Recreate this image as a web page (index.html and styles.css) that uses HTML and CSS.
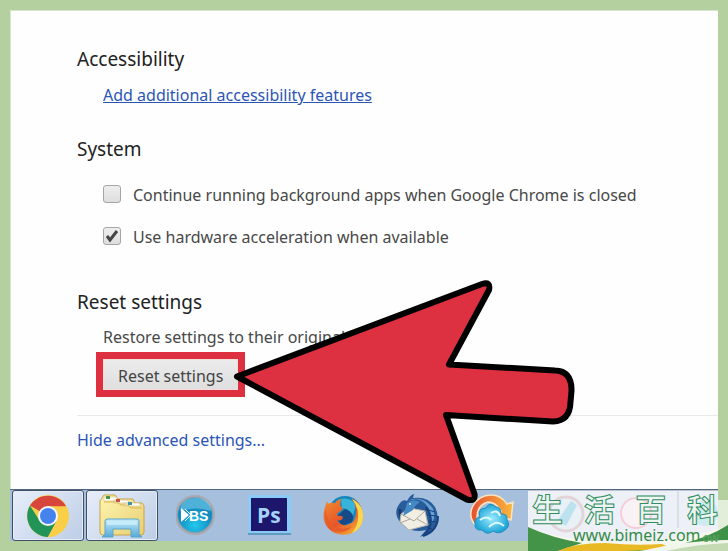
FILE: index.html
```html
<!DOCTYPE html>
<html lang="en">
<head>
<meta charset="utf-8">
<title>Settings</title>
<link rel="stylesheet" href="styles.css">
</head>
<body>
<div class="screen">
  <main class="settings">
    <section class="group">
      <h2>Accessibility</h2>
      <div class="group-body"><a class="underlined" href="#">Add additional accessibility features</a></div>
    </section>
    <section class="group system">
      <h2>System</h2>
      <div class="group-body options">
        <label class="option"><input type="checkbox">Continue running background apps when Google Chrome is closed</label>
        <label class="option"><input type="checkbox" checked>Use hardware acceleration when available</label>
      </div>
    </section>
    <section class="group reset">
      <h2>Reset settings</h2>
      <div class="group-body">
        <p>Restore settings to their original defaults.</p>
        <div class="callout">
          <button type="button">Reset settings</button>
          <svg class="arrow" width="344" height="224" viewBox="233 280 344 224" aria-hidden="true">
            <path d="M237 376.500L482 284Q491 281 489 290L449 364.500L555 370.500Q572 371 571.500 391L570.500 402Q570 421 553 421.500L446 415L474.500 494Q476 502 467 499.500Z" fill="#dd3040" stroke="#000" stroke-width="6" stroke-linejoin="round"/>
          </svg>
        </div>
      </div>
    </section>
    <footer class="more"><a href="#">Hide advanced settings...</a></footer>
  </main>
  <nav class="taskbar" aria-label="Taskbar">
    <button class="task open" type="button" aria-label="Chrome">
      <svg width="42" height="42" viewBox="0 0 42 42">
        <circle cx="21" cy="21" r="21" fill="#f9cf48"/>
        <path d="M21 21L3 10.500A21 21 0 0 1 39.200 11.500H21Z" fill="#d7453b"/>
        <path d="M3 10.500A21 21 0 0 0 21 42L30 25.500 21 21 12.500 25.500Z" fill="#229457"/>
        <path d="M39.200 11.500H21L29.500 26 21 42A21 21 0 0 0 39.200 11.500Z" fill="#f9cf48"/>
        <circle cx="21" cy="21" r="10" fill="#f5f8fb"/><circle cx="21" cy="21" r="8" fill="#4482ee"/>
      </svg>
    </button>
    <button class="task open" type="button" aria-label="File Explorer">
      <svg width="46" height="44" viewBox="0 0 46 44">
        <defs><linearGradient id="folder" x2="1" y2="1"><stop stop-color="#fff5b2"/><stop offset="1" stop-color="#e7cf72"/></linearGradient>
        <linearGradient id="stand" y2="1" x2="0"><stop stop-color="#c5ecfb"/><stop offset="1" stop-color="#57a9d8"/></linearGradient></defs>
        <path d="M1 7L5 1H16L19 5H34L36 9H43L45 12V38Q45 41 42 41H4Q1 41 1 38Z" fill="url(#folder)" stroke="#c8a445"/>
        <path d="M5 7V3H17L20 7ZM15 9V6H28L31 9ZM25 12V9H40L42 12Z" fill="#fffef5" stroke="#c9bd88" stroke-width=".6"/>
        <path d="M5 8H18L22 11H29L32 14H43" fill="none" stroke="#dbb64c"/>
        <path d="M7 2H11V5H7Z" fill="#47924c"/><path d="M17 5H21V8H17Z" fill="#c9513d"/><path d="M29 8H33V11H29Z" fill="#3c93ac"/>
        <path d="M6 27Q6 25 9 25H37Q40 25 40 27V40L43 43H32V35H14V43H3L6 40Z" fill="url(#stand)" stroke="#5aa6ca"/>
        <path d="M8 27H38V31H8Z" fill="#c9effb" opacity=".8"/>
      </svg>
    </button>
    <button class="task" type="button" aria-label="BS Player">
      <svg width="42" height="42" viewBox="0 0 42 42">
        <defs><radialGradient id="disc" cy=".8"><stop stop-color="#22c8ed"/><stop offset="1" stop-color="#138bc0"/></radialGradient></defs>
        <circle cx="19" cy="20" r="19" fill="#7b9fb9" stroke="#aaa9b0" stroke-width="2"/><circle cx="19" cy="20" r="17" fill="url(#disc)"/>
        <path d="M4 16Q5 3 20 3T35 16Q20 11 4 16Z" fill="#8ed8ef" opacity=".5"/>
        <path d="M5 13L13 20 5 27Z" fill="#fff"/><path d="M9 14L15 20 9 26" fill="none" stroke="#fff"/>
        <text x="13" y="26" class="bs">BS</text>
      </svg>
    </button>
    <button class="task" type="button" aria-label="Photoshop">
      <svg width="46" height="42" viewBox="0 0 46 42">
        <path d="M0 0H43V40H0Z" fill="#8acaf4"/><path d="M0 38H43V40H0Z" fill="#629bbf"/><path d="M3 3H39V36H3Z" fill="#1c176d"/>
        <text x="9" y="28" class="ps">Ps</text>
      </svg>
    </button>
    <button class="task" type="button" aria-label="Firefox">
      <svg width="46" height="42" viewBox="0 0 46 42">
        <defs><linearGradient id="fox" x2=".8" y2="1"><stop stop-color="#ef912d"/><stop offset=".6" stop-color="#e9532a"/><stop offset="1" stop-color="#f5b334"/></linearGradient></defs>
        <circle cx="23" cy="18" r="17" fill="#1686bd"/><path d="M19 4Q28 2 34 10L31 20 25 14 20 13Z" fill="#38b3d9"/>
        <path d="M23 14Q34 18 30 27L20 31 14 22Z" fill="#174b88"/>
        <path d="M5 6L6 9Q9 7 13 8 16 4 19 4L18 10 21 14 16 18Q14 19 16 21 19 20 21 22 20 27 15 25 18 31 25 30 34 28 34 17 34 8 29 3 41 8 41 22 40 35 28 39 14 42 6 33-1 25 3 12Z" fill="url(#fox)"/>
        <path d="M30 4Q42 10 41 23 40 34 30 38 37 29 36 20 36 11 30 4Z" fill="#f9d94b"/>
        <path d="M4 14Q4 26 13 32 22 36 30 31 24 39 13 36 0 29 4 14Z" fill="#e65c2a"/>
      </svg>
    </button>
    <button class="task" type="button" aria-label="Thunderbird">
      <svg width="48" height="44" viewBox="0 0 48 44">
        <path d="M12 7Q15 1 19 0L18 4Q33 2 40 13 47 27 36 38L25 43 31 36Q16 40 6 29-3 19 5 9Q8 5 12 7Z" fill="#285c9b"/>
        <path d="M13 7Q25 2 32 12 39 20 34 32 43 23 37 13 29 3 17 5Z" fill="#67a1d4"/>
        <path d="M5 15Q4 25 14 33" fill="none" stroke="#173873" stroke-width="3"/>
        <path d="M6 20L15 14 30 17 33 31 14 36 5 28Z" fill="#f1eee4" stroke="#b9b4aa"/>
        <path d="M6 20L19 27 30 17M5 29L15 25M33 31L22 25" fill="none" stroke="#aba69b"/>
        <path d="M12 9Q18 4 25 8 20 11 18 16L8 22Z" fill="#4688c5"/><path d="M31 13Q42 30 28 42 43 37 43 22" fill="none" stroke="#17417d" stroke-width="2"/>
        <path d="M30 15L40 18M32 21L42 22M33 27L41 28M32 33L37 35" stroke="#163f7a"/>
        <circle cx="15" cy="10" r="1" fill="#d8edff"/>
      </svg>
    </button>
    <button class="task" type="button" aria-label="Cloud sync">
      <svg width="48" height="44" viewBox="0 0 48 44">
        <defs><radialGradient id="cloud"><stop stop-color="#9becff"/><stop offset="1" stop-color="#20a5d8"/></radialGradient>
        <linearGradient id="turn" x2="1"><stop stop-color="#e84e31"/><stop offset="1" stop-color="#fbb83d"/></linearGradient></defs>
        <path d="M8 33Q-2 23 4 12 10 1 22 1 32 1 38 10L44 8 42 26 27 20 32 17Q27 8 19 8 8 11 8 23Z" fill="url(#turn)" stroke="#f9e4bf" stroke-width="1.500"/>
        <path d="M13 36Q5 37 6 29 5 24 11 23 8 14 17 14 20 7 27 13 33 13 31 20 39 19 38 26 42 32 36 36 30 41 24 37 18 42 13 36Z" fill="url(#cloud)" stroke="#238fbd"/>
        <path d="M11 26Q18 21 22 26M22 19Q29 15 31 22M20 33Q28 25 35 32" fill="none" stroke="#ddfbff" stroke-width="2"/>
      </svg>
    </button>
  </nav>
  <aside class="watermark">
    <svg width="200" height="61" viewBox="0 0 200 61" aria-hidden="true">
      <path d="M0 0H190V10H200V61H0Z" fill="#edf1f7"/>
      <path d="M0 0H190" stroke="#8d98a8"/>
      <path d="M190 0H200V10H190Z" fill="#b5d09f"/><path d="M190 10H200V50H190Z" fill="#e2edda"/>
      <circle cx="38" cy="24" r="17" fill="#e9f0f6" stroke="#e2d4d9" stroke-width="3"/><path d="M30 30L43 11 49 15 38 36Z" fill="#bde2ef"/>
      <circle cx="108" cy="23" r="15" fill="#f8f1f5" stroke="#f4cdd9" stroke-width="2"/><circle cx="177" cy="23" r="13" fill="#ceebef"/>
      <path d="M150 0V38" stroke="#c4cbd7"/>
      <path d="M0 37Q28 48 61 51 100 53 132 50 171 46 200 36V61H0Z" fill="#f5f8ed"/>
      <path d="M0 37Q24 48 54 53L30 61H0Z" fill="#439448"/>
      <path d="M30 61Q47 53 77 53 108 56 134 54L150 61Z" fill="#e9b923"/>
      <path d="M96 61Q160 60 200 35V50Q164 52 130 61Z" fill="#3e9247"/>
      <path d="M112 61Q160 50 200 50V61Z" fill="#f2f6ea"/>
      <path d="M138 61Q170 54 200 53V61Z" fill="#c3dab3"/>
    </svg>
    <div class="marks"><div class="brand"><span>生</span><span>活</span><span>百</span><span>科</span></div>
    <div class="site"><span>www.bimeiz.com</span><span class="ghost">ow</span></div></div>
  </aside>
</div>
</body>
</html>
```

FILE: styles.css
```css
* { box-sizing: border-box; }
body {
  margin: 0;
  background: #b5d09f;
  color: #484848;
  font: 16px/24px "Noto Sans", "Open Sans", sans-serif;
}
.screen { position: relative; padding: 10px; }
.settings {
  background: #fefefe;
  border-top: 1px solid #d8e5ce;
  border-left: 1px solid #d8e5ce;
  padding: 34px 0 37px 66px;
}
h2 { margin: 0 0 10px; color: #222; font-size: 19px; font-weight: 400; line-height: 28px; }
p { margin: 0; }
a { color: #2b55b5; text-decoration: none; }
a.underlined { text-decoration: underline; }
.group-body { padding-left: 26px; }
.system { margin-top: 28px; }
.system h2 { margin-bottom: 20px; }
.options { display: grid; gap: 18px; }
.option { display: flex; align-items: center; gap: 12px; }
.option input {
  appearance: none;
  width: 18px;
  height: 18px;
  margin: 0 0 2px;
  border: 1px solid #a5a5a5;
  border-radius: 3px;
  background: linear-gradient(#eee, #dedede);
}
.option input:checked {
  background: url("data:image/svg+xml,%3Csvg xmlns='http://www.w3.org/2000/svg' viewBox='0 0 16 16'%3E%3Cpath d='M3 8l3 4 7-9' fill='none' stroke='%23444' stroke-width='3'/%3E%3C/svg%3E"), linear-gradient(#eee, #dedede);
}
.reset { margin-top: 39px; }
.reset h2 { margin-bottom: 9px; }
.callout {
  position: relative;
  width: max-content;
  margin: 3px 0 18px -7px;
  border: 7px solid #dd3040;
}
.callout button {
  display: block;
  height: 31px;
  padding: 2px 14px 0;
  border: 1px solid #f4dddd;
  background: linear-gradient(#ececec, #dedede);
  color: #444;
  font: inherit;
  line-height: 24px;
}
.arrow { position: absolute; z-index: 2; top: -79px; left: 130px; }
.more { border-top: 1px solid #e9e9e9; padding-top: 12px; }
.taskbar {
  display: flex;
  align-items: stretch;
  height: 52px;
  padding-left: 2px;
  border-top: 1px solid #52657f;
  background: #a6bfdd;
}
.task {
  display: grid;
  place-items: center;
  width: 74px;
  padding: 0;
  border: 0;
  background: transparent;
}
.task.open {
  width: 72px;
  margin-right: 2px;
  border: 1px solid #425066;
  border-radius: 3px;
  background: linear-gradient(135deg, #e7eefa, #bdcde6);
  box-shadow: inset 0 0 0 1px #e6edf7;
}
.bs { fill: #fff; font: bold 14px "Liberation Sans", sans-serif; }
.ps { fill: #a5d3f7; font: bold 21px "Open Sans", sans-serif; }
.watermark { position: absolute; z-index: 3; right: 0; bottom: 0; display: grid; }
.watermark > * { grid-area: 1 / 1; }
.watermark svg { display: block; }
.marks { position: relative; }
.brand {
  display: flex;
  justify-content: space-between;
  padding: 2px 10px 0 4px;
  color: #edf4f2;
  font: bold 31px/32px "Noto Sans CJK SC", sans-serif;
  -webkit-text-stroke: 1px #2f8f60;
}
.site {
  display: flex;
  align-items: end;
  gap: 2px;
  padding-left: 45px;
  color: #358a48;
  font: 16px/22px "Noto Sans", sans-serif;
}
.ghost { color: #5fa366; font-size: 12px; line-height: 16px; }
```
